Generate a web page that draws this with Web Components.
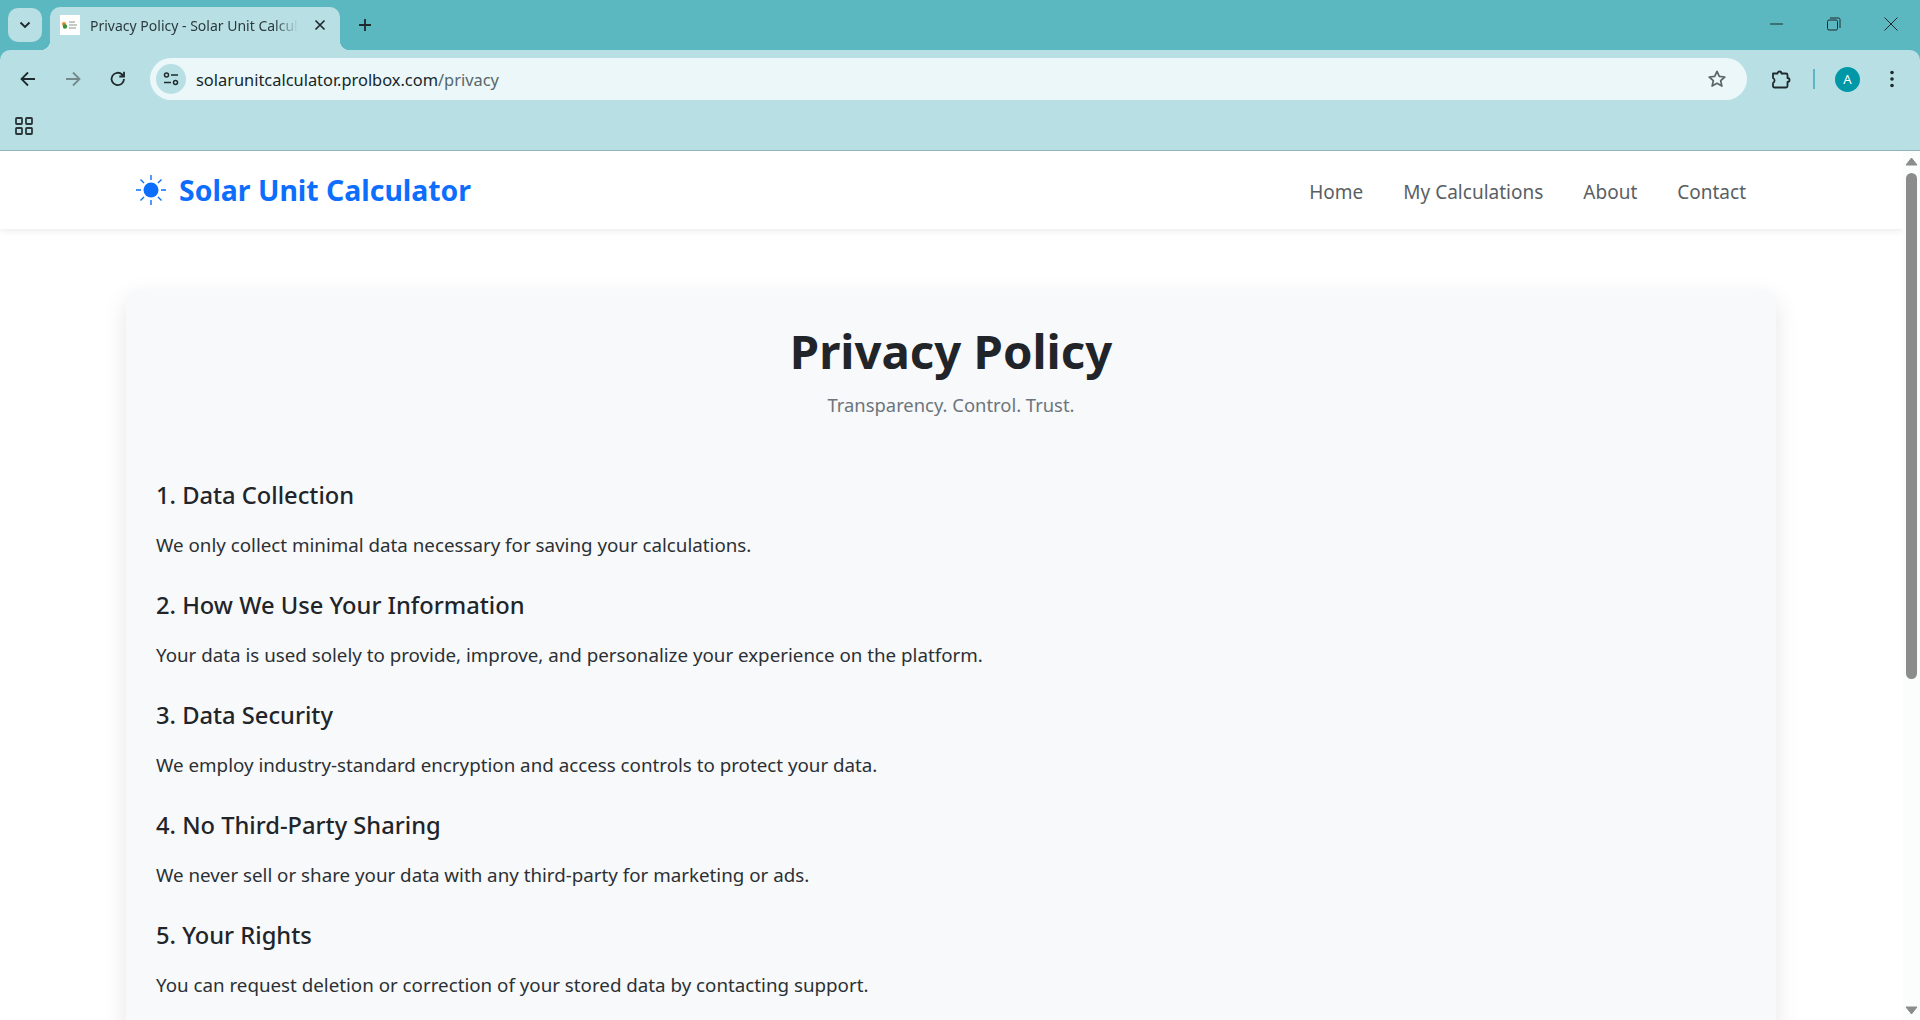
<!DOCTYPE html>
<html lang="en">
<head>
<meta charset="utf-8">
<title>Privacy Policy - Solar Unit Calculator</title>
<style>
  html, body { margin: 0; height: 100%; overflow: hidden; background: #fff; }
  body { display: flex; flex-direction: column; font-family: "Noto Sans", "Open Sans", sans-serif; }
</style>
</head>
<body>
<browser-frame url-host="solarunitcalculator.prolbox.com" url-path="/privacy" tab-title="Privacy Policy - Solar Unit Calculator"></browser-frame>
<page-view>
  <site-nav brand="Solar Unit Calculator"></site-nav>
  <policy-card heading="Privacy Policy" tagline="Transparency. Control. Trust.">
    <policy-section heading="1. Data Collection">We only collect minimal data necessary for saving your calculations.</policy-section>
    <policy-section heading="2. How We Use Your Information">Your data is used solely to provide, improve, and personalize your experience on the platform.</policy-section>
    <policy-section heading="3. Data Security">We employ industry-standard encryption and access controls to protect your data.</policy-section>
    <policy-section heading="4. No Third-Party Sharing">We never sell or share your data with any third-party for marketing or ads.</policy-section>
    <policy-section heading="5. Your Rights">You can request deletion or correction of your stored data by contacting support.</policy-section>
  </policy-card>
</page-view>

<script>
class BrowserFrame extends HTMLElement {
    constructor() {
        super();
        this.attachShadow({ mode: "open" });
    }

    connectedCallback() {
        this.render();
    }

    style() {
        return `
            :host { display: block; flex: none; font-family: "Noto Sans", "Open Sans", sans-serif; color: #1f2a2e; }
            svg { display: block; }
            .strip { height: 50px; background: #5bb8c1; display: flex; align-items: flex-end; position: relative; }
            .tab-list-btn { width: 34px; height: 34px; border-radius: 10px; background: #b8e0e4; margin: 0 0 8px 8px; display: flex; align-items: center; justify-content: center; }
            .tab { position: relative; width: 290px; height: 43px; margin-left: 8px; background: #b8e0e4; border-radius: 10px 10px 0 0; display: flex; align-items: center; box-sizing: border-box; padding: 0 0 7px 10px; }
            .tab::before, .tab::after { content: ""; position: absolute; bottom: 0; width: 10px; height: 10px; }
            .tab::before { left: -10px; background: radial-gradient(circle at 0 0, transparent 10px, #b8e0e4 10.5px); }
            .tab::after { right: -10px; background: radial-gradient(circle at 100% 0, transparent 10px, #b8e0e4 10.5px); }
            .favicon { width: 20px; height: 20px; background: #fff; flex: none; display: flex; align-items: center; justify-content: center; }
            .tab-title { margin-left: 10px; width: 212px; overflow: hidden; white-space: nowrap; font-size: 14px; color: #2b3a3e;
                -webkit-mask-image: linear-gradient(to right, #000 185px, transparent 208px); mask-image: linear-gradient(to right, #000 185px, transparent 208px); }
            .tab-close { margin-left: 12px; }
            .new-tab { margin: 0 0 18px 18px; }
            .win { position: absolute; top: 0; right: 1px; height: 48px; display: flex; }
            .win div { width: 57px; height: 48px; display: flex; align-items: center; justify-content: center; }
            .toolbar { height: 58px; background: #b8e0e4; border-radius: 10px 10px 0 0; display: flex; align-items: center; position: relative; }
            .strip-under { background: #5bb8c1; }
            .nav-btn { width: 20px; height: 20px; flex: none; }
            .back { margin-left: 18px; }
            .fwd { margin-left: 25px; }
            .reload { margin-left: 25px; }
            .omni { margin-left: 22px; width: 1597px; height: 42px; border-radius: 21px; background: #ebf7f8; display: flex; align-items: center; flex: none; box-sizing: border-box; padding-left: 6px; }
            .site-btn { width: 30px; height: 30px; border-radius: 50%; background: #b8e0e4; display: flex; align-items: center; justify-content: center; flex: none; }
            .url { margin-left: 10px; font-size: 16.4px; color: #17262a; white-space: nowrap; flex: 1; }
            .url span { color: #56666b; }
            .star { margin-right: 20px; }
            .ext { margin-left: 24px; }
            .sep { width: 2px; height: 20px; background: #5bb8c1; margin-left: 22px; }
            .avatar { width: 25px; height: 25px; border-radius: 50%; background: #0097a7; color: #fff; font-size: 13px; display: flex; align-items: center; justify-content: center; margin-left: 20px; }
            .menu { margin-left: 30px; }
            .bookmarks { height: 43px; background: #b8e0e4; border-bottom: 1px solid #8fb3b7; display: flex; align-items: flex-start; padding: 9px 0 0 15px; box-sizing: border-box; }
        `;
    }

    render() {
        this.shadowRoot.innerHTML = `
            <style>${this.style()}</style>
            <div class="strip">
                <div class="tab-list-btn">
                    <svg width="12" height="8" viewBox="0 0 12 8"><path d="M1.5 1.5 6 6l4.5-4.5" fill="none" stroke="#1f2a2e" stroke-width="1.9"/></svg>
                </div>
                <div class="tab">
                    <div class="favicon">
                        <svg width="18" height="10" viewBox="0 0 18 10"><circle cx="3" cy="4" r="2" fill="#e08a2c"/><circle cx="4" cy="6.5" r="2.2" fill="#3f8f3f"/><path d="M8 2h6M8 5h8M8 8h7" stroke="#7a8a7a" stroke-width=".9"/></svg>
                    </div>
                    <div class="tab-title">${this.getAttribute("tab-title")}</div>
                    <svg class="tab-close" width="12" height="12" viewBox="0 0 12 12"><path d="M1.5 1.5l9 9M10.5 1.5l-9 9" stroke="#1f2a2e" stroke-width="1.7"/></svg>
                </div>
                <svg class="new-tab" width="14" height="14" viewBox="0 0 14 14"><path d="M7 1v12M1 7h12" stroke="#1f2a2e" stroke-width="1.8"/></svg>
                <div class="win">
                    <div><svg width="14" height="2" viewBox="0 0 14 2"><path d="M0 1h13" stroke="#1f2a2e" stroke-width="1"/></svg></div>
                    <div><svg width="14" height="14" viewBox="0 0 14 14"><rect x=".5" y="3" width="10" height="10" rx="1.5" fill="none" stroke="#1f2a2e"/><path d="M3 1h8.5A1.5 1.5 0 0 1 13 2.500V11" fill="none" stroke="#1f2a2e"/></svg></div>
                    <div><svg width="14" height="14" viewBox="0 0 14 14"><path d="M.5.500l13 13M13.500.500l-13 13" stroke="#1f2a2e" stroke-width="1"/></svg></div>
                </div>
            </div>
            <div class="strip-under">
            <div class="toolbar">
                <svg class="nav-btn back" viewBox="0 0 20 20"><path d="M17 10H4M10 3.500 3.500 10l6.500 6.500" fill="none" stroke="#1f2a2e" stroke-width="1.8"/></svg>
                <svg class="nav-btn fwd" viewBox="0 0 20 20"><path d="M3 10h13M10 3.500l6.500 6.500-6.500 6.500" fill="none" stroke="#75898d" stroke-width="1.8"/></svg>
                <svg class="nav-btn reload" viewBox="0 0 20 20"><path d="M16 10a6.200 6.200 0 1 1-1.900-4.500L16 7.300M16 2.800v4.700h-4.700" fill="none" stroke="#1f2a2e" stroke-width="1.8"/></svg>
                <div class="omni">
                    <div class="site-btn">
                        <svg width="16" height="14" viewBox="0 0 16 14"><circle cx="3.500" cy="3" r="2" fill="none" stroke="#1f2a2e" stroke-width="1.500"/><path d="M8 3h7M1 10.500h7" stroke="#1f2a2e" stroke-width="1.500"/><circle cx="12.500" cy="10.500" r="2" fill="none" stroke="#1f2a2e" stroke-width="1.500"/></svg>
                    </div>
                    <div class="url">${this.getAttribute("url-host")}<span>${this.getAttribute("url-path")}</span></div>
                    <svg class="star" width="20" height="20" viewBox="0 0 20 20"><path d="M10 2.300l2.300 5.100 5.500.6-4.100 3.700 1.200 5.400L10 14.300l-4.900 2.800 1.200-5.400L2.200 8l5.500-.6z" fill="none" stroke="#5a6669" stroke-width="1.700" stroke-linejoin="round"/></svg>
                </div>
                <svg class="ext" width="20" height="22" viewBox="0 0 20 22"><path d="M2 5.500h4.500a2 2 0 0 1 4 0H15a1.500 1.500 0 0 1 1.500 1.500v3a2 2 0 0 1 0 4v4a1.500 1.500 0 0 1-1.500 1.500H3.500A1.500 1.500 0 0 1 2 18v-3a2.500 2.500 0 0 0 1.500-2.500A2.500 2.500 0 0 0 2 10z" fill="none" stroke="#1f2a2e" stroke-width="1.800" stroke-linejoin="round"/></svg>
                <div class="sep"></div>
                <div class="avatar">A</div>
                <svg class="menu" width="4" height="18" viewBox="0 0 4 18"><circle cx="2" cy="2.500" r="1.800" fill="#1f2a2e"/><circle cx="2" cy="9" r="1.800" fill="#1f2a2e"/><circle cx="2" cy="15.500" r="1.800" fill="#1f2a2e"/></svg>
            </div>
            </div>
            <div class="bookmarks">
                <svg width="18" height="18" viewBox="0 0 18 18"><g fill="none" stroke="#2a3639" stroke-width="1.800"><rect x="1" y="1" width="6" height="6" rx=".8"/><rect x="11" y="1" width="6" height="6" rx=".8"/><rect x="1" y="11" width="6" height="6" rx=".8"/><rect x="11" y="11" width="6" height="6" rx=".8"/></g></svg>
            </div>
        `;
    }
}

class PageView extends HTMLElement {
    constructor() {
        super();
        this.attachShadow({ mode: "open" });
        this.shadowRoot.innerHTML = `
            <style>
                :host { display: flex; flex: 1; min-height: 0; overflow: hidden; background: #fff; }
                .content { flex: 1; min-width: 0; overflow: hidden; }
                .bar { width: 17px; flex: none; background: #fbfcfc; display: flex; flex-direction: column; align-items: center; }
                .thumb { width: 11px; height: 506px; margin-top: 7px; background: #8c8c8c; border-radius: 6px; }
                .spacer { flex: 1; }
                svg { display: block; }
                .up { margin-top: 6px; }
                .down { margin-bottom: 5px; }
            </style>
            <div class="content"><slot></slot></div>
            <div class="bar">
                <svg class="up" width="13" height="9" viewBox="0 0 13 9"><path d="M6.500 1 12 8H1z" fill="#8c8c8c" stroke="#8c8c8c" stroke-linejoin="round"/></svg>
                <div class="thumb"></div>
                <div class="spacer"></div>
                <svg class="down" width="13" height="9" viewBox="0 0 13 9"><path d="M1 1h11L6.500 8z" fill="#8c8c8c" stroke="#8c8c8c" stroke-linejoin="round"/></svg>
            </div>
        `;
    }
}

class SiteNav extends HTMLElement {
    constructor() {
        super();
        this.attachShadow({ mode: "open" });
    }

    connectedCallback() {
        const links = ["Home", "My Calculations", "About", "Contact"];
        this.shadowRoot.innerHTML = `
            <style>
                :host { display: block; position: relative; background: #fff; box-shadow: 0 2px 6px rgba(0,0,0,.08); }
                .wrap { height: 78px; display: flex; align-items: center; justify-content: space-between; box-sizing: border-box; padding: 0 157px 0 135px; }
                .brand { display: flex; align-items: center; gap: 12px; font-size: 28.4px; font-weight: 700; color: #0d6efd; white-space: nowrap; }
                nav { display: flex; gap: 40px; padding-top: 3px; }
                a { font-size: 19px; color: #5a5f64; text-decoration: none; white-space: nowrap; }
            </style>
            <div class="wrap">
                <div class="brand">
                    <svg width="32" height="32" viewBox="0 0 32 32"><circle cx="16" cy="16" r="7.500" fill="#0d6efd"/><path d="M16 1v5M16 26v5M1 16h5M26 16h5M5.500 5.500l3.500 3.500M23 23l3.500 3.500M26.500 5.500 23 9M9 23l-3.500 3.500" stroke="#0d6efd" stroke-width="1.400"/></svg>
                    <span>${this.getAttribute("brand")}</span>
                </div>
                <nav>${links.map(l => `<a href="#">${l}</a>`).join("")}</nav>
            </div>
        `;
    }
}

class PolicyCard extends HTMLElement {
    constructor() {
        super();
        this.attachShadow({ mode: "open" });
    }

    connectedCallback() {
        this.shadowRoot.innerHTML = `
            <style>
                :host { display: block; margin: 61px 127px 0 126px; background: #f8f9fa; border-radius: 12px; box-shadow: 0 8px 24px rgba(0,0,0,.1); padding: 31px 30px 30px; height: 900px; box-sizing: border-box; }
                h1 { margin: 0; text-align: center; font-size: 47.3px; line-height: 60px; font-weight: 700; color: #212529; }
                .tag { margin: 11px 0 0; text-align: center; font-size: 18.4px; line-height: 26px; color: #6c757d; }
                .list { margin-top: 61px; }
            </style>
            <h1>${this.getAttribute("heading")}</h1>
            <p class="tag">${this.getAttribute("tagline")}</p>
            <div class="list"><slot></slot></div>
        `;
    }
}

class PolicySection extends HTMLElement {
    constructor() {
        super();
        this.attachShadow({ mode: "open" });
    }

    connectedCallback() {
        this.shadowRoot.innerHTML = `
            <style>
                :host { display: block; height: 110px; }
                h4 { margin: 0; font-size: 23.7px; line-height: 32px; font-weight: 500; color: #212529; }
                p { margin: 20px 0 0; font-size: 18.75px; line-height: 27px; color: #2b3035; }
            </style>
            <h4>${this.getAttribute("heading")}</h4>
            <p><slot></slot></p>
        `;
    }
}

customElements.define("browser-frame", BrowserFrame);
customElements.define("page-view", PageView);
customElements.define("site-nav", SiteNav);
customElements.define("policy-card", PolicyCard);
customElements.define("policy-section", PolicySection);
</script>
</body>
</html>
